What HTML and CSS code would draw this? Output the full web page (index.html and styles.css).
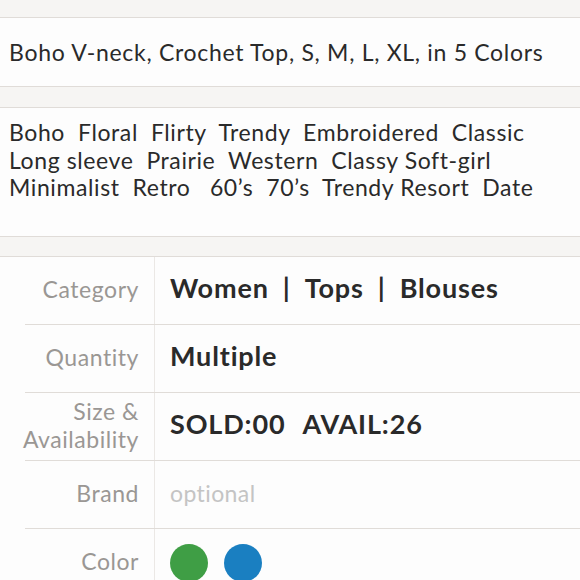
FILE: index.html
```html
<!DOCTYPE html>
<html>
<head>
<meta charset="utf-8">
<link rel="stylesheet" href="styles.css">
</head>
<body>
<div class="band band-top"></div>
<div class="section title">Boho V-neck, Crochet Top, S, M, L, XL, in 5 Colors</div>
<div class="band band-mid"></div>
<div class="section tags">Boho  Floral  Flirty  Trendy  Embroidered  Classic
Long sleeve  Prairie  Western  Classy Soft-girl
Minimalist  Retro   60’s  70’s  Trendy Resort  Date</div>
<div class="band band-low"></div>
<div class="table">
  <div class="row">
    <div class="label">Category</div>
    <div class="value strong">Women<span class="sep">|</span>Tops<span class="sep">|</span>Blouses</div>
  </div>
  <div class="row">
    <div class="label">Quantity</div>
    <div class="value strong">Multiple</div>
  </div>
  <div class="row">
    <div class="label two">Size &amp;<br>Availability</div>
    <div class="value strong">SOLD:00<span class="gap">AVAIL:26</span></div>
  </div>
  <div class="row">
    <div class="label">Brand</div>
    <div class="value placeholder">optional</div>
  </div>
  <div class="row">
    <div class="label">Color</div>
    <div class="value swatches"><span class="dot green"></span><span class="dot blue"></span></div>
  </div>
</div>
</body>
</html>
```
FILE: styles.css
```css
html, body {
  margin: 0;
  padding: 0;
}
body {
  background: #f6f5f3;
  font-family: Lato, "Open Sans", sans-serif;
  color: #2a2a2a;
  width: 580px;
  overflow: hidden;
}
.band {
  border-bottom: 1px solid #e0dcd8;
}
.band-top { height: 17px; }
.band-mid { height: 20px; }
.band-low { height: 19px; }
.section {
  background: #fdfdfd;
  border-bottom: 1px solid #e0dcd8;
  padding: 0 9px;
  font-size: 23px;
  letter-spacing: 0.7px;
  white-space: nowrap;
}
.title {
  height: 67px;
  padding-bottom: 1px;
  display: flex;
  align-items: center;
}
.tags {
  height: 117px;
  padding-top: 11px;
  white-space: pre;
  line-height: 27.5px;
  letter-spacing: 0.6px;
}
.table {
  background: #fdfdfd;
}
.row {
  display: grid;
  grid-template-columns: 130px 1fr;
  margin-left: 25px;
  height: 67px;
  border-bottom: 1px solid #e0dcd8;
}
.label {
  border-right: 1px solid #ebe8e5;
  color: #9a9794;
  font-size: 23px;
  letter-spacing: 0.55px;
  text-align: right;
  padding-right: 15px;
  padding-bottom: 4px;
  display: flex;
  align-items: center;
  justify-content: flex-end;
  white-space: nowrap;
}
.label.two {
  line-height: 28px;
}
.value {
  display: flex;
  align-items: center;
  padding-left: 15px;
  padding-bottom: 4px;
  font-size: 23px;
  white-space: nowrap;
}
.strong {
  font-weight: 700;
  font-size: 27px;
  letter-spacing: 0.85px;
  color: #2a2a2a;
  padding-bottom: 6px;
}
.sep {
  margin: 0 14px 0 14px;
}
.gap {
  margin-left: 17px;
}
.placeholder {
  color: #c4c4c4;
  letter-spacing: 0.4px;
}
.swatches {
  gap: 16px;
  padding-bottom: 0;
}
.dot {
  width: 38px;
  height: 38px;
  border-radius: 50%;
  display: block;
}
.green { background: #3f9e45; }
.blue { background: #1a7fc1; }
```
